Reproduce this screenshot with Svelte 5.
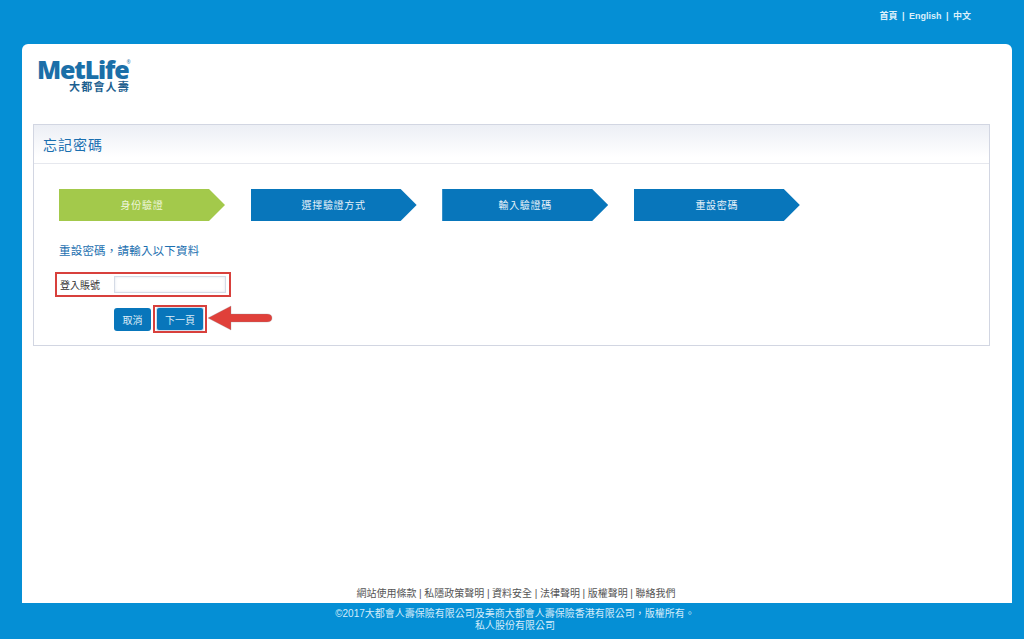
<script>
  const steps = [
    { label: "身份驗證", active: true },
    { label: "選擇驗證方式" },
    { label: "輸入驗證碼" },
    { label: "重設密碼" }
  ];
  const links = ["網站使用條款", "私隱政策聲明", "資料安全", "法律聲明", "版權聲明", "聯絡我們"];
</script>

<div class="page">
  <nav class="top">
    <span>首頁</span><i>|</i><span>English</span><i>|</i><span>中文</span>
  </nav>

  <main class="card">
    <div class="logo">
      <div class="brand">MetLife<sup>®</sup></div>
      <div class="brand-zh">大都會人壽</div>
    </div>

    <section class="panel">
      <h1>忘記密碼</h1>
      <div class="body">
        <div class="steps">
          {#each steps as s}
            <div class="step" class:active={s.active}>{s.label}</div>
          {/each}
        </div>
        <p class="hint">重設密碼，請輸入以下資料</p>
        <div class="field">
          <label for="acc">登入賬號</label>
          <input id="acc" type="text" />
        </div>
        <div class="actions">
          <button class="btn">取消</button>
          <div class="next-box">
            <button class="btn next">下一頁</button>
            <svg class="arrow" width="68" height="28" viewBox="0 0 68 28">
              <path d="M1 13 L24 1 L24 9 L60 9 Q65 9 65 13 Q65 17 60 17 L24 17 L24 25 Z" fill="#e0403a" stroke="#8a8f96" stroke-opacity=".35" stroke-width=".8" />
            </svg>
          </div>
        </div>
      </div>
    </section>

    <div class="links">
      {#each links as l, i}
        {#if i > 0}<i>|</i>{/if}<span>{l}</span>
      {/each}
    </div>
  </main>

  <footer>
    <div>©2017大都會人壽保險有限公司及美商大都會人壽保險香港有限公司，版權所有。</div>
    <div>私人股份有限公司</div>
  </footer>
</div>

<style>
  :global(body) {
    margin: 0;
    background: #058fd5;
  }
  .page {
    width: 1024px;
    height: 639px;
    display: flex;
    flex-direction: column;
    overflow: hidden;
    font-family: "Liberation Sans", "Noto Sans CJK TC", sans-serif;
    background: #058fd5;
  }
  .top {
    height: 44px;
    box-sizing: border-box;
    padding: 10px 53px 0 0;
    display: flex;
    justify-content: flex-end;
    gap: 4.5px;
    color: #dcf0fb;
    font-size: 9px;
    font-weight: 700;
    line-height: 13px;
  }
  .top i {
    font-style: normal;
  }
  .card {
    margin-left: 22px;
    width: 990px;
    height: 559px;
    box-sizing: border-box;
    background: #fff;
    border-radius: 6px 6px 0 0;
    padding: 13px 22px 0 11px;
    display: flex;
    flex-direction: column;
  }
  .logo {
    height: 67px;
    margin-left: 4px;
    width: 93px;
  }
  .brand {
    font-family: "Open Sans", "Liberation Sans", sans-serif;
    font-size: 25px;
    font-weight: 800;
    letter-spacing: -1.15px;
    line-height: 24px;
    color: #1b6fa8;
    white-space: nowrap;
  }
  .brand sup {
    font-size: 5px;
    font-weight: 400;
    vertical-align: 15px;
    line-height: 0;
    letter-spacing: 0;
    margin-left: -2px;
  }
  .brand-zh {
    margin-top: 1px;
    font-size: 11px;
    font-weight: 700;
    line-height: 11px;
    letter-spacing: 1.2px;
    color: #1d5f8f;
    text-align: right;
  }
  .panel {
    width: 957px;
    height: 222px;
    box-sizing: border-box;
    border: 1px solid #d2d6e2;
  }
  h1 {
    margin: 0;
    height: 39px;
    box-sizing: border-box;
    padding: 10px 0 0 9px;
    font-size: 14px;
    font-weight: 400;
    line-height: 20px;
    letter-spacing: 1px;
    color: #1a6fb0;
    background: linear-gradient(#eceff5, #fff 85%);
    border-bottom: 1px solid #e6e8ee;
  }
  .body {
    padding: 25px 0 0 25px;
  }
  .steps {
    display: flex;
    gap: 25.6px;
  }
  .step {
    width: 166px;
    height: 32px;
    background: #0876bb;
    color: #e6f2fa;
    font-size: 10px;
    letter-spacing: 0.7px;
    line-height: 33px;
    text-align: center;
    clip-path: polygon(0 0, 150px 0, 100% 50%, 150px 100%, 0 100%);
  }
  .step.active {
    background: #a3c94b;
    color: #eef6dc;
  }
  .hint {
    margin: 22px 0 0;
    font-size: 11.5px;
    line-height: 16px;
    letter-spacing: 0.2px;
    color: #1c70b0;
  }
  .field {
    margin: 13px 0 0 -4px;
    width: 176px;
    height: 25px;
    box-sizing: border-box;
    border: 2px solid #d8403c;
    display: flex;
    align-items: center;
    padding-left: 3px;
  }
  .field label {
    width: 54px;
    font-size: 10px;
    color: #333;
  }
  .field input {
    width: 112px;
    height: 17px;
    box-sizing: border-box;
    margin: 0;
    padding: 0;
    border: 1px solid #d5dbe6;
    background: #fff;
    box-shadow: inset 0 0 3px #dfe5ee;
  }
  .actions {
    margin: 8px 0 0 55px;
    display: flex;
    align-items: center;
    gap: 2px;
  }
  .btn {
    width: 37px;
    height: 23px;
    padding: 0;
    border: none;
    border-radius: 3px;
    background: #0876bb;
    color: #dcecf7;
    font: 10px "Liberation Sans", "Noto Sans CJK TC", sans-serif;
  }
  .next-box {
    position: relative;
    width: 54px;
    height: 28px;
    box-sizing: border-box;
    border: 2px solid #d8403c;
    display: flex;
    align-items: center;
    justify-content: center;
  }
  .next {
    width: 46px;
    height: 22px;
    border-radius: 2px;
    box-shadow: 0 0 0 1px #cfe0ee;
  }
  .arrow {
    position: absolute;
    left: 52px;
    top: -2px;
  }
  .links {
    margin-top: auto;
    height: 16px;
    margin-right: -22px;
    margin-left: -11px;
    display: flex;
    justify-content: center;
    gap: 2.6px;
    padding-right: 2px;
    font-size: 10px;
    line-height: 14px;
    color: #555;
  }
  .links i {
    font-style: normal;
  }
  footer {
    flex: 1;
    padding: 5px 0 0 6px;
    text-align: center;
    color: #d4ecfa;
    font-size: 10px;
    line-height: 12px;
  }
</style>
